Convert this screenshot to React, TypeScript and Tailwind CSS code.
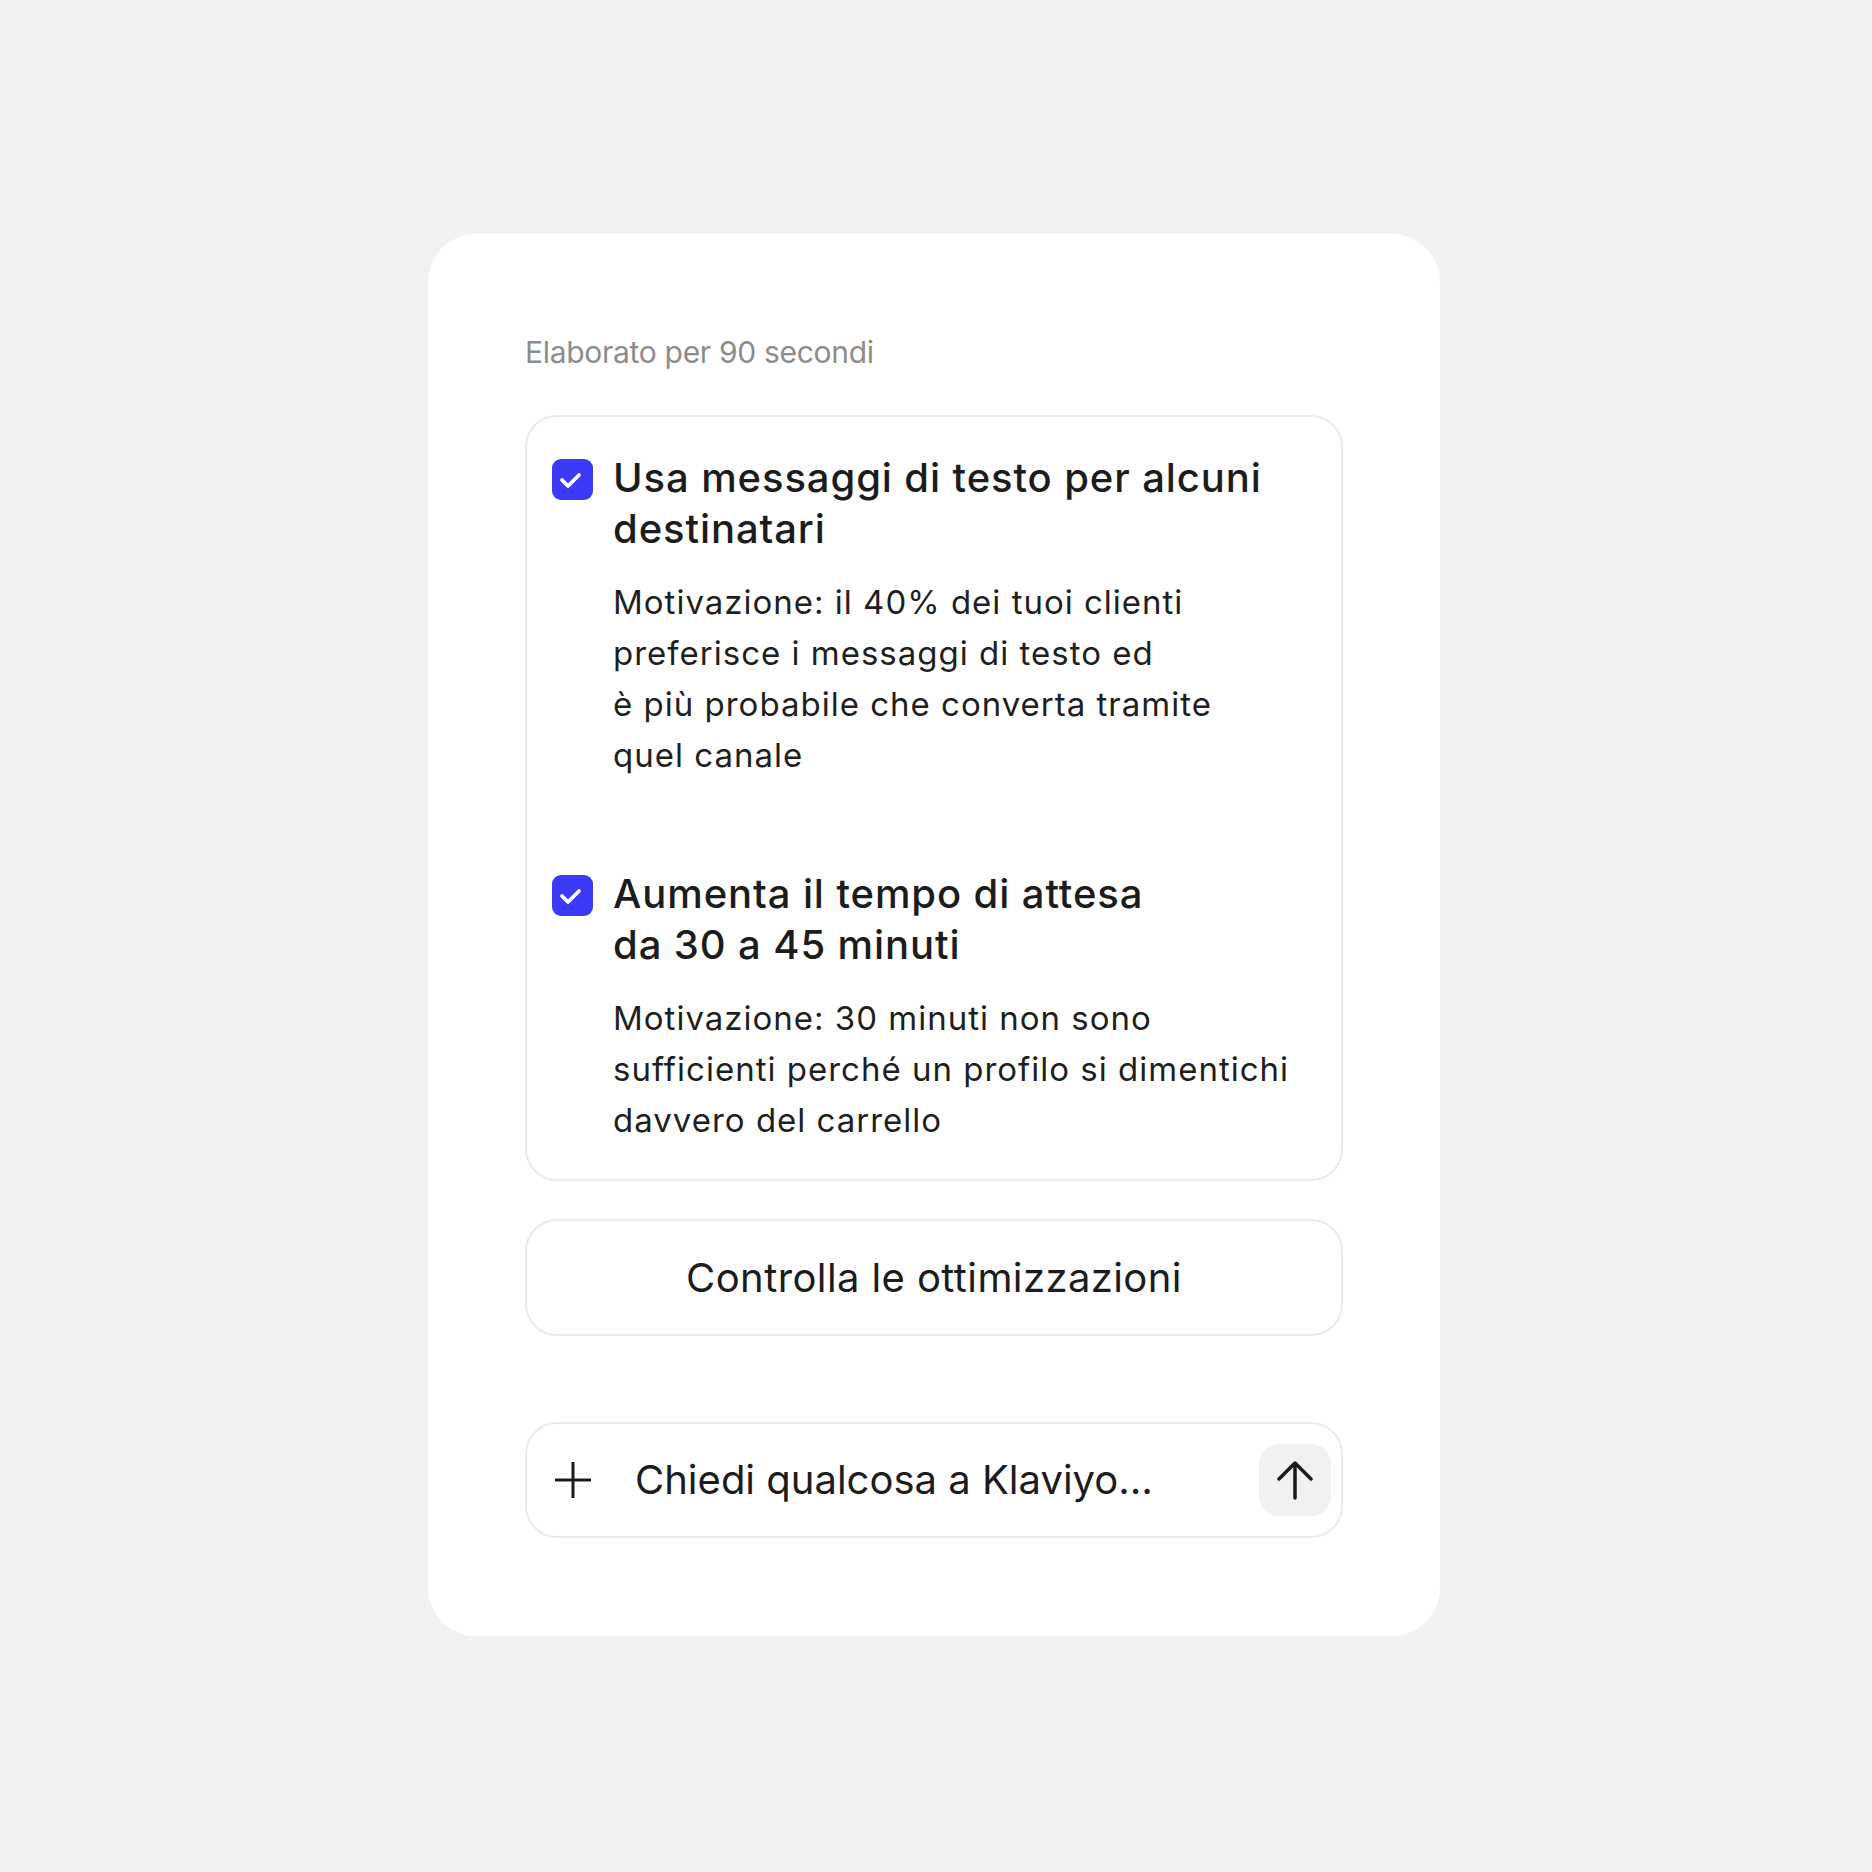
import React from "react";

const CheckBox = () => (
  <div className="mt-[7px] flex h-[41px] w-[41px] shrink-0 items-center justify-center rounded-[9px] bg-[#3b3bf7]">
    <svg width="41" height="41" viewBox="0 0 41 41" fill="none">
      <polyline
        points="10,21 16,27 27,16"
        stroke="#ffffff"
        strokeWidth="3.8"
        strokeLinecap="round"
        strokeLinejoin="round"
      />
    </svg>
  </div>
);

interface ItemProps {
  title: React.ReactNode;
  body: React.ReactNode;
}

const Item = ({ title, body }: ItemProps) => (
  <div className="flex items-start gap-[20px]">
    <CheckBox />
    <div className="flex flex-col">
      <h3 className="text-[40px] font-medium leading-[51px] tracking-[0.9px] text-[#1c1c1c]">{title}</h3>
      <p className="mt-[23px] whitespace-nowrap text-[33px] leading-[51px] tracking-[1px] text-[#1f1f1f]">
        {body}
      </p>
    </div>
  </div>
);

export default function App() {
  return (
    <div
      className="min-h-[1872px] bg-[#f3f2f0] pl-[428px] pt-[234px]"
      style={{ fontFamily: "Inter, 'Noto Sans', sans-serif" }}
    >
      <div className="flex w-[1012px] flex-col rounded-[48px] bg-white px-[97px] pb-[98px] pt-[96px]">
        <p className="text-[30px] leading-[45px] tracking-[-0.3px] text-[#8c8c8c]">Elaborato per 90 secondi</p>

        {/* suggerimenti */}
        <div className="mt-[40px] flex flex-col gap-[87px] rounded-[32px] border-2 border-[#ebebea] pb-[33px] pl-[25px] pr-[20px] pt-[35px]">
          <Item
            title={
              <>
                Usa messaggi di testo per alcuni
                <br />
                destinatari
              </>
            }
            body={
              <>
                Motivazione: il 40% dei tuoi clienti
                <br />
                preferisce i messaggi di testo ed
                <br />
                è più probabile che converta tramite
                <br />
                quel canale
              </>
            }
          />
          <Item
            title={
              <>
                Aumenta il tempo di attesa
                <br />
                da 30 a 45 minuti
              </>
            }
            body={
              <>
                Motivazione: 30 minuti non sono
                <br />
                sufficienti perché un profilo si dimentichi
                <br />
                davvero del carrello
              </>
            }
          />
        </div>

        <button className="mt-[38px] flex h-[117px] items-center justify-center rounded-[32px] border-2 border-[#ebebea] text-[40px] leading-[50px] tracking-[0.4px] text-[#1c1c1c]">
          Controlla le ottimizzazioni
        </button>

        {/* chat input */}
        <div className="mt-[86px] flex h-[116px] items-center rounded-[32px] border-2 border-[#ebebea] pl-[28px] pr-[10px]">
          <svg width="36" height="36" viewBox="0 0 36 36" fill="none" className="shrink-0">
            <path d="M18 0V36M0 18H36" stroke="#1c1c1c" strokeWidth="3" />
          </svg>
          <span className="ml-[44px] flex-1 text-[40px] leading-[50px] text-[#1c1c1c]">
            Chiedi qualcosa a Klaviyo…
          </span>
          <div className="flex h-[72px] w-[72px] items-center justify-center rounded-[20px] bg-[#f2f1ef]">
            <svg width="36" height="40" viewBox="0 0 36 40" fill="none">
              <path
                d="M18 3V38M2 19L18 3L34 19"
                stroke="#1a1a1a"
                strokeWidth="3.5"
                strokeLinecap="round"
                strokeLinejoin="round"
              />
            </svg>
          </div>
        </div>
      </div>
    </div>
  );
}
